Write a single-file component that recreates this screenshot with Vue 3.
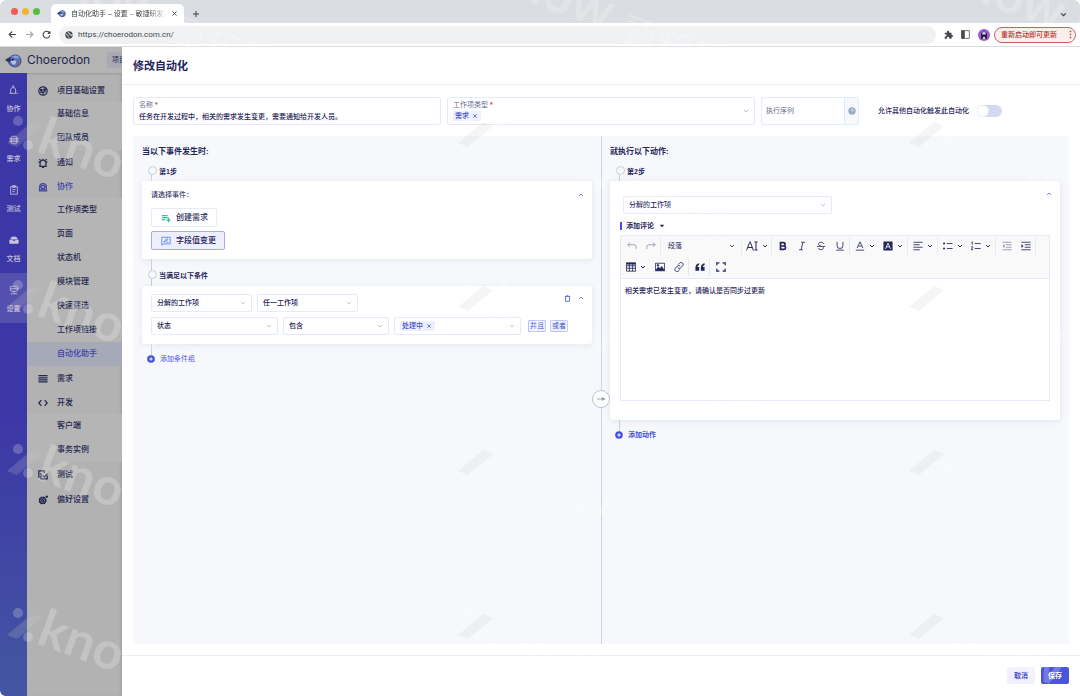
<script setup>
import { h, ref } from 'vue'

const glyphs = {
  back: '<path d="M21 12H4M11 4l-8 8 8 8"/>',
  forward: '<path d="M3 12h17M13 4l8 8-8 8"/>',
  reload: '<path d="M20 8a9 9 0 1 0 1 6M21 3v6h-6"/>',
  plus: '<path d="M12 3v18M3 12h18"/>',
  close: '<path d="M5 5l14 14M19 5L5 19"/>',
  down: '<path d="M4 8l8 8 8-8"/>',
  up: '<path d="M4 16l8-8 8 8"/>',
  globe: '<circle cx="12" cy="12" r="11" fill="currentColor" stroke="none"/><path d="M3 9l6 4v3l3 3v3M9 2l2 5 4 1v4l5 2 1-5" stroke="#eff1f3" stroke-width="2.5"/>',
  puzzle: '<path fill="currentColor" stroke="none" d="M2 7h6V5a3 3 0 0 1 6 0v2h6v6h1a3 3 0 0 1 0 6h-1v4h-6v-2a3 3 0 0 0-6 0v2H2v-6h2a3 3 0 0 0 0-6H2z"/>',
  panel: '<rect x="2" y="2" width="20" height="20"/><path fill="currentColor" d="M2 2h7v20H2z"/>',
  bell: '<path d="M1 20h18M4 20v-8a6 6 0 0 1 12 0v8"/><circle cx="10" cy="3" r="1.5"/><path d="M21 20h2"/>',
  stack: '<rect x="5" y="3" width="14" height="18" rx="4"/><path d="M1 8h22M1 12h22M1 16h22"/>',
  clip: '<path d="M4 4h16v18H4zM9 1h6v5H9zM8 11h8M8 16h6"/>',
  box: '<path fill="currentColor" d="M2 12h20v8H2zM4 10l3-5h10l3 5"/><path stroke="#3c37a6" d="M9 13h6"/>',
  server: '<rect x="3" y="3" width="18" height="12" rx="4"/><path d="M3 9h18M12 15v5M4 21h16"/>',
  group: '<circle cx="12" cy="12" r="10"/><circle cx="8" cy="10" r="2" fill="currentColor"/><circle cx="16" cy="9" r="2" fill="currentColor"/><path d="M6 17c2-5 8-2 6 3M12 14h6"/>',
  alarm: '<path d="M3 20h18M5 20v-8a7 7 0 0 1 14 0v8M12 2v3M3 3l3 2M21 3l-3 2M1 9h3M20 9h3M11 20v3h2v-3"/>',
  team: '<path d="M2 21h20M4 21v-9a8 8 0 0 1 16 0v9"/><circle cx="12" cy="12" r="4"/><path d="M8 21v-4h8v4M3 11h4M17 11h4"/>',
  rows: '<path d="M1 4h22M1 9h22M1 14h22M1 19h22"/>',
  code: '<path d="M8 5l-6 7 6 7M16 5l6 7-6 7"/>',
  check: '<path d="M7 17H2V2h13v5M7 7v14h15v-8M11 13l4 4 7-8"/>',
  gear: '<circle cx="11" cy="13" r="7.5" stroke-dasharray="4 2" stroke-width="4"/><circle cx="11" cy="13" r="7"/><circle cx="11" cy="13" r="2.5"/><path d="M21 1v6M18 4h6"/>',
  addlist: '<path d="M2 6h14M2 11h14M2 16h8M18 11v11M13 17h10"/>',
  edit: '<path d="M2 3h20v16H6l-4 3zM7 15l2-4 6-5 2 2-6 5zM13 15h5"/>',
  trash: '<path d="M3 5h18M9 2h6M5 5v17h14V5"/>',
  help: '<circle cx="12" cy="12" r="11" fill="currentColor" stroke="none"/><path stroke="#fff" d="M8 10c0-5 8-5 8-1 0 3-4 2-4 6M12 17v2"/>',
  addcircle: '<circle cx="12" cy="12" r="11.5" fill="currentColor" stroke="none"/><path stroke="#fff" stroke-width="3" d="M12 7v10M7 12h10"/>',
  arrow: '<path d="M2 12h15"/><path fill="currentColor" stroke="none" d="M14 7l9 5-9 5z"/>',
  caret: '<path fill="currentColor" stroke="none" d="M3 7h18l-9 10z"/>',
  undo: '<path d="M7 4L2 9l5 5M2 9h15a5 5 0 0 1 5 5v5"/>',
  redo: '<path d="M17 4l5 5-5 5M22 9H7a5 5 0 0 0-5 5v5"/>',
  size: '<path d="M1 21L8 3l7 18M4 15h8M20 4v16M17 4h6M17 20h6"/>',
  bold: '<path stroke-width="4" d="M6 4h7a4 4 0 0 1 0 8H6zM6 12h8a4 4 0 0 1 0 8H6z"/>',
  italic: '<path d="M10 3h9M5 21h9M14 3l-4 18"/>',
  strike: '<path d="M18 7c0-6-12-5-12 0 0 3 3 4 6 5M2 13h20M6 17c0 6 13 5 12-2"/>',
  under: '<path d="M5 2v9a7 7 0 0 0 14 0V2M3 22h18"/>',
  color: '<path d="M5 17l7-15 7 15M8 12h8M2 22h20"/>',
  bg: '<rect x="1" y="1" width="22" height="22" rx="1" fill="currentColor" stroke="none"/><path stroke="#fff" d="M6 19l6-14 6 14M8 14h8"/>',
  align: '<path d="M1 3h22M1 9h15M1 15h22M1 21h15"/>',
  ul: '<path d="M9 6h14M9 18h14"/><circle cx="2.5" cy="6" r="2.5" fill="currentColor" stroke="none"/><circle cx="2.5" cy="18" r="2.5" fill="currentColor" stroke="none"/>',
  ol: '<path d="M9 6h14M9 18h14M1 3l2-1v7M0 14h4v2l-4 5h5" />',
  outdent: '<path d="M1 3h22M9 9h14M9 15h14M1 21h22"/><path fill="currentColor" stroke="none" d="M6 7v10l-5-5z"/>',
  indent: '<path d="M1 3h22M9 9h14M9 15h14M1 21h22"/><path fill="currentColor" stroke="none" d="M1 7v10l5-5z"/>',
  table: '<path d="M1 2h22v20H1zM1 9h22M1 15h22M8 4v18M16 4v18"/><path stroke-width="4" d="M1 4h22"/>',
  image: '<path d="M1 3h22v18H1z"/><path fill="currentColor" d="M2 20l6-8 4 4 4-5 6 9z"/><circle cx="7" cy="8" r="2" fill="currentColor"/>',
  link: '<path d="M10 6l4-4a5 5 0 0 1 7 7l-5 5a5 5 0 0 1-7 0M14 18l-4 4a5 5 0 0 1-7-7l5-5a5 5 0 0 1 7 0"/>',
  quote: '<path fill="currentColor" stroke="none" d="M10 3c-6 1-9 5-9 11v7h9v-9H6c0-3 2-4 4-5zM23 3c-6 1-9 5-9 11v7h9v-9h-4c0-3 2-4 4-5z"/>',
  full: '<path stroke-width="3" d="M2 8V2h6M16 2h6v6M22 16v6h-6M8 22H2v-6"/>',
  fish: '<path fill="#5674bd" stroke="#2b3766" stroke-width="1" d="M6 9c3-6 13-7 16 0 2 6-1 12-8 12-5 0-8-3-9-7z"/><path fill="#2b3766" stroke="none" d="M0 11l7-4 2 5-4 3z"/><path fill="#b9c3e6" stroke="none" d="M8 13c2-2 6-2 8 0l-2 5c-3 0-5-2-6-5z"/><path fill="#8ba3e0" stroke="none" d="M10 6c4-2 8-1 10 2l-5 1z"/><circle cx="11" cy="11" r="1.5" fill="#1c244a" stroke="none"/><path stroke="#b3524f" stroke-width="2" d="M18 14l3 1M16 18l3-1"/>',
  face: '<circle cx="12" cy="12" r="12" fill="#9a5bd6" stroke="none"/><path fill="#2d2340" stroke="none" d="M6 20V10c0-7 12-7 12 0v10z"/><path fill="#cfc3dc" stroke="none" d="M8 9c0-4 8-4 8 0l-1 2H9z"/><path stroke="#fff" d="M10 20l2-4 2 4"/>'
}
const Icon = ({ name, s = 9, w = 2 }) =>
  h('svg', { viewBox: '0 0 24 24', width: s, height: s, fill: 'none', stroke: 'currentColor', 'stroke-width': w, 'aria-hidden': 'true', innerHTML: glyphs[name] })
Icon.props = ['name', 's', 'w']

const rail = [
  ['bell', '协作'], ['stack', '需求'], ['clip', '测试'], ['box', '文档'], ['server', '设置']
]
const menu = [
  { icon: 'group', text: '项目基础设置', subs: ['基础信息', '团队成员'] },
  { icon: 'alarm', text: '通知' },
  { icon: 'team', text: '协作', active: true, subs: ['工作项类型', '页面', '状态机', '模块管理', '快速筛选', '工作项链接', '自动化助手'] },
  { icon: 'rows', text: '需求' },
  { icon: 'code', text: '开发', subs: ['客户端', '事务实例'] },
  { icon: 'check', text: '测试' },
  { icon: 'gear', text: '偏好设置' }
]
const toolsTop = [
  [['size', '字号', true]],
  [['bold', '加粗'], ['italic', '斜体'], ['strike', '删除线'], ['under', '下划线']],
  [['color', '文字颜色', true], ['bg', '背景颜色', true]],
  [['align', '对齐', true]],
  [['ul', '无序列表', true], ['ol', '有序列表', true]],
  [['outdent', '减少缩进', false, true], ['indent', '增加缩进']]
]
const toolsBottom = [
  [['table', '表格', true], ['image', '图片'], ['link', '链接']],
  [['quote', '引用']],
  [['full', '全屏']]
]
const name = ref('任务在开发过程中，相关的需求发生变更，需要通知给开发人员。')
const comment = ref('相关需求已发生变更，请确认是否同步过更新')
const allow = ref(false)
const marks = []
for (let r = 0; r < 5; r++) for (let c = 0; c < 3; c++) marks.push([7 + c * 451, 635 - r * 164])
</script>

<template>
  <div class="window">
    <header class="tabs">
      <div class="lights"><i class="red"></i><i class="amber"></i><i class="green"></i></div>
      <div class="tab">
        <Icon name="fish" :s="9" />
        <span class="tab-title">自动化助手 – 设置 – 敏捷研发项</span>
        <button aria-label="关闭标签页"><Icon name="close" :s="7" :w="3" /></button>
      </div>
      <button class="new-tab" aria-label="新建标签页"><Icon name="plus" :s="8" :w="3" /></button>
      <button class="tab-list" aria-label="搜索标签页"><Icon name="down" :s="7" :w="4" /></button>
    </header>
    <div class="bar">
      <button aria-label="后退"><Icon name="back" :s="9" :w="3" /></button>
      <button class="dim" aria-label="前进"><Icon name="forward" :s="9" :w="3" /></button>
      <button aria-label="刷新"><Icon name="reload" :s="9" :w="3" /></button>
      <label class="address">
        <Icon name="globe" :s="8" />
        <input aria-label="网址" value="https://choerodon.com.cn/" />
      </label>
      <button aria-label="扩展程序"><Icon name="puzzle" :s="9" /></button>
      <button aria-label="侧边栏"><Icon name="panel" :s="9" /></button>
      <button aria-label="用户"><Icon name="face" :s="12" /></button>
      <button class="update">重新启动即可更新<b>⋮</b></button>
    </div>

    <div class="page">
      <div class="app">
        <div class="brand">
          <Icon name="fish" :s="17" :w="1" />
          <span class="brand-name">Choerodon</span>
          <span class="chip">项目</span>
        </div>
        <div class="navs">
          <nav class="rail">
            <a v-for="(r, i) in rail" :key="r[1]" href="#" :class="{ on: i === 4 }">
              <Icon :name="r[0]" :s="10" />{{ r[1] }}
            </a>
          </nav>
          <nav class="menu">
            <template v-for="m in menu" :key="m.text">
              <a href="#" class="head" :class="{ on: m.active, parent: m.subs }"><Icon :name="m.icon" :s="10" :w="3" />{{ m.text }}</a>
              <div v-if="m.subs" class="subs">
                <a v-for="s in m.subs" :key="s" href="#" :class="{ current: s === '自动化助手' }">{{ s }}</a>
              </div>
            </template>
          </nav>
        </div>
      </div>

      <main class="drawer">
        <h1>修改自动化</h1>
        <div class="content">
          <div class="form">
            <label class="field">
              <span>名称<em>*</em></span>
              <input v-model="name" />
            </label>
            <div class="field" role="combobox" aria-label="工作项类型" aria-expanded="false">
              <span>工作项类型<em>*</em></span>
              <div class="tag-line"><span class="tag">需求<button aria-label="移除需求"><Icon name="close" :s="6" :w="3" /></button></span></div>
              <Icon class="field-arrow" name="down" :s="6" :w="3" />
            </div>
            <label class="sequence">
              <input placeholder="执行序列" aria-label="执行序列" />
              <span><Icon name="help" :s="8" /></span>
            </label>
            <label class="allow">允许其他自动化触发此自动化<input v-model="allow" type="checkbox" role="switch" /></label>
          </div>

          <div class="flow">
            <section>
              <h2>当以下事件发生时:</h2>
              <h3 class="step">第1步</h3>
              <div class="card events">
                <div class="card-head"><span>请选择事件：</span><button aria-label="收起"><Icon name="up" :s="6" :w="3" /></button></div>
                <button class="event"><Icon class="teal" name="addlist" :s="10" :w="3" />创建需求</button>
                <button class="event picked"><Icon class="blue" name="edit" :s="10" />字段值变更</button>
              </div>
              <h3 class="step linked">当满足以下条件</h3>
              <div class="card conditions">
                <div class="line">
                  <span class="select w-m"><select aria-label="对象"><option>分解的工作项</option></select><Icon name="down" :s="6" :w="3" /></span>
                  <span class="select w-m"><select aria-label="范围"><option>任一工作项</option></select><Icon name="down" :s="6" :w="3" /></span>
                  <div class="actions">
                    <button aria-label="删除"><Icon name="trash" :s="7" :w="3" /></button>
                    <button aria-label="收起"><Icon name="up" :s="6" :w="3" /></button>
                  </div>
                </div>
                <div class="line">
                  <span class="select w-l"><select aria-label="字段"><option>状态</option></select><Icon name="down" :s="6" :w="3" /></span>
                  <span class="select w-m"><select aria-label="运算"><option>包含</option></select><Icon name="down" :s="6" :w="3" /></span>
                  <div class="select w-l multi" role="combobox" aria-label="值" aria-expanded="false">
                    <span class="tag">处理中<button aria-label="移除处理中"><Icon name="close" :s="6" :w="3" /></button></span>
                    <Icon name="down" :s="6" :w="3" />
                  </div>
                  <div class="joins"><button>并且</button><button>或者</button></div>
                </div>
              </div>
              <button class="add"><Icon name="addcircle" :s="8" />添加条件组</button>
            </section>

            <section class="right">
              <h2>就执行以下动作:</h2>
              <h3 class="step">第2步</h3>
              <div class="card action">
                <button class="fold" aria-label="收起"><Icon name="up" :s="6" :w="3" /></button>
                <span class="select target"><select aria-label="目标"><option>分解的工作项</option></select><Icon name="down" :s="6" :w="3" /></span>
                <button class="comment">添加评论<Icon name="caret" :s="6" /></button>
                <div class="editor">
                  <div class="tools">
                    <div class="tool-row">
                      <div class="group">
                        <button class="faded" aria-label="撤销"><Icon name="undo" :s="10" /></button>
                        <button class="faded" aria-label="重做"><Icon name="redo" :s="10" /></button>
                      </div>
                      <div class="group">
                        <span class="para"><select aria-label="段落格式"><option>段落</option></select><Icon name="down" :s="6" :w="4" /></span>
                      </div>
                      <div v-for="(g, i) in toolsTop" :key="i" class="group">
                        <button v-for="t in g" :key="t[0]" :aria-label="t[1]" :class="{ drop: t[2], faded: t[3] }">
                          <Icon :name="t[0]" :s="t[0] === 'size' ? 12 : 10" /><Icon v-if="t[2]" name="down" :s="6" :w="4" />
                        </button>
                      </div>
                    </div>
                    <div class="tool-row">
                      <div v-for="(g, i) in toolsBottom" :key="i" class="group">
                        <button v-for="t in g" :key="t[0]" :aria-label="t[1]" :class="{ drop: t[2] }">
                          <Icon :name="t[0]" :s="10" /><Icon v-if="t[2]" name="down" :s="6" :w="4" />
                        </button>
                      </div>
                    </div>
                  </div>
                  <textarea v-model="comment" aria-label="评论内容"></textarea>
                </div>
              </div>
              <button class="add bold"><Icon name="addcircle" :s="8" />添加动作</button>
            </section>
            <span class="next"><Icon name="arrow" :s="10" /></span>
          </div>
        </div>
        <footer>
          <button class="cancel">取消</button>
          <button class="save">保存</button>
        </footer>
      </main>
    </div>

    <svg class="watermark" aria-hidden="true">
      <g v-for="(m, i) in marks" :key="i" :transform="`translate(${m[0]} ${m[1]})`">
        <path class="slash" d="M0 0L25 -21L35 -17L10 4Z" />
        <circle class="dot" cx="11" cy="-22" r="5" />
        <circle class="dot" cx="21" cy="2" r="5" />
        <text class="latin" x="28" y="8" transform="rotate(20 28 8)">know</text>
        <text class="han" x="160" y="61" transform="rotate(20 160 61)">甄知科技</text>
      </g>
    </svg>
  </div>
</template>

<style>
body { margin: 0; background: #fff; }
</style>

<style scoped>
* { box-sizing: border-box; }
.window {
  position: relative;
  display: flex;
  flex-direction: column;
  min-height: 100vh;
  overflow: hidden;
  border-radius: 6px;
  background: #fff;
  color: #1f2459;
  font: 7px/10px "Liberation Sans", "Noto Sans CJK SC", sans-serif;
}
button, input, select, textarea {
  margin: 0;
  padding: 0;
  border: 0;
  outline: 0;
  background: none;
  color: inherit;
  font: inherit;
}
button { display: inline-flex; align-items: center; justify-content: center; }
svg { flex: none; display: block; }
a { color: inherit; text-decoration: none; }
h1, h2, h3 { margin: 0; }

.tabs { display: flex; align-items: center; height: 23px; padding: 0 13px 0 11px; background: #dadde2; color: #3c4043; }
.lights { display: flex; gap: 4px; width: 40px; }
.lights i { width: 7px; height: 7px; border-radius: 50%; }
.red { background: #ee5c54; }
.amber { background: #f3b42f; }
.green { background: #55c03f; }
.tab { display: flex; align-items: center; align-self: flex-end; gap: 5px; width: 133px; height: 19px; padding: 0 6px; border-radius: 5px 5px 0 0; background: #fff; }
.tab-title { flex: 1; overflow: hidden; white-space: nowrap; -webkit-mask-image: linear-gradient(90deg, #000 85%, transparent); mask-image: linear-gradient(90deg, #000 85%, transparent); }
.new-tab { margin: 5px 0 0 8px; }
.tab-list { margin: 5px 0 0 auto; }
.bar { display: flex; align-items: center; gap: 8px; height: 24px; padding: 0 4px 0 8px; border-bottom: 1px solid #d9dbde; color: #45494d; }
.dim { color: #a2a5a8; }
.address { display: flex; flex: 1; align-items: center; gap: 5px; height: 18px; padding: 0 6px; border-radius: 9px; background: #eff1f3; }
.address input { flex: 1; font: 8px/12px Roboto, sans-serif; }
.update { justify-content: space-between; width: 82px; height: 16px; margin-left: -4px; padding: 0 5px 0 6px; border: 1px solid #c9605c; border-radius: 8px; background: #fbeeed; color: #b8322c; font-weight: 500; white-space: nowrap; }
.update b { width: 4px; font-size: 9px; }

.page { display: flex; flex: 1; }
.app { display: flex; flex: none; flex-direction: column; width: 122px; overflow: hidden; background: #b2b2b2; box-shadow: inset -2px 0 2px #a6a6a6; }
.brand { display: flex; align-items: center; height: 26px; padding-left: 5px; overflow: hidden; background: #b4b4b4; box-shadow: 0 1px 2px #999; white-space: nowrap; }
.brand-name { flex: none; width: 79px; margin-left: 5px; color: #232750; font: 12px/16px Inter, sans-serif; }
.chip { flex: none; width: 40px; height: 16px; margin-left: 1px; padding: 3px 5px; border-radius: 2px; background: #a8aab3; }
.navs { display: flex; flex: 1; }
.rail { width: 27px; background: linear-gradient(#3c37a6 55%, #4456a2); color: #c6c5dc; font-weight: 500; }
.rail a { display: flex; flex-direction: column; align-items: center; gap: 9px; height: 50px; padding-top: 12px; }
.rail .on { background: #5350ae; }
.menu { flex: 1; padding-top: 6px; color: #23264f; font-size: 8px; font-weight: 500; }
.menu a { display: flex; align-items: center; height: 24px; padding-left: 30px; }
.menu .head { gap: 9px; height: 25px; padding-left: 11px; }
.menu .parent { height: 23px; }
.menu .on { color: #4044a8; }
.subs { background: #b5b5b5; }
.menu .current { background: #a5a9b8; color: #4044a8; }

.drawer { display: flex; flex: 1; flex-direction: column; min-width: 0; }
h1 { height: 38px; padding: 11px; border-bottom: 1px solid #eaf0f9; font-size: 11px; line-height: 16px; }
.content { display: flex; flex: 1; flex-direction: column; gap: 11px; padding: 12px 11px 11px; }
.form { display: grid; grid-template-columns: 308fr 308fr 98fr 204fr; gap: 6px; }
.field { position: relative; display: flex; flex-direction: column; height: 28px; padding: 2px 5px; border: 1px solid #e3ebf6; border-radius: 2px; }
.field > span { color: #6b6e91; }
em { margin-left: 2px; color: #e0403a; font-style: normal; font-weight: bold; }
.field input { height: 12px; font-weight: 500; }
.field-arrow { position: absolute; right: 5px; top: 10px; color: #9aa9c4; }
.tag-line { display: flex; padding-top: 1px; }
.tag { display: flex; align-items: center; gap: 3px; height: 10px; padding: 0 3px 0 2px; border-radius: 2px; background: #eeeffd; color: #4650cf; font-weight: 500; }
.sequence { display: flex; height: 28px; overflow: hidden; border: 1px solid #e3ebf6; border-radius: 2px; }
.sequence input { flex: 1; min-width: 0; padding: 0 4px; }
.sequence input::placeholder { color: #686b8d; opacity: 1; }
.sequence span { display: grid; place-items: center; width: 14px; border-left: 1px solid #e3ebf6; background: #f5f8fd; color: #99aabf; }
.allow { display: flex; align-items: center; gap: 8px; padding-left: 13px; font-weight: 500; }
.allow input { appearance: none; width: 25px; height: 12px; border-radius: 6px; background: radial-gradient(circle at 6px 6px, #fff 5px, transparent 6px) #d5daf1; }

.flow { position: relative; display: grid; flex: 1; grid-template-columns: 1fr 1fr; background: #f6f8fc; }
section { min-width: 0; padding: 9px; }
.right { border-left: 1px solid #cbd5e5; padding-left: 8px; }
h2 { height: 20px; padding-top: 1px; font-size: 8px; line-height: 12px; }
.step { position: relative; height: 16px; padding: 2px 0 0 17px; font-size: 7px; line-height: 10px; }
.step::before { content: ""; position: absolute; left: 6px; top: 1px; width: 7px; height: 7px; border: 1px solid #c8d0dd; border-radius: 50%; background: #f6f8fc; z-index: 1; }
.step::after { content: ""; position: absolute; left: 9px; top: 8px; bottom: 0; width: 1px; background: #c8d0dd; }
.linked { height: 27px; padding-top: 12px; }
.linked::before { top: 11px; }
.linked::after { top: 0; }
.card { position: relative; border-radius: 3px; background: #fff; box-shadow: 0 1px 6px rgba(40, 50, 90, .1); }
.events { display: flex; flex-direction: column; align-items: flex-start; gap: 4px; height: 78px; padding: 9px 8px 0 9px; }
.card-head { display: flex; justify-content: space-between; width: 100%; height: 14px; color: #303463; font-weight: 500; }
.card-head button, .fold, .actions { color: #5a62d8; }
.card-head button { height: 10px; }
.event { gap: 5px; height: 19px; padding: 0 8px 0 9px; border: 1px solid #e3ebf6; border-radius: 2px; font-size: 8px; font-weight: 500; }
.picked { border-color: #a9a9ee; background: #eeeffd; }
.teal { color: #3fb89b; }
.blue { color: #5580f0; }
.conditions { display: flex; flex-direction: column; gap: 5px; height: 58px; padding: 8px 8px 0 9px; }
.line { display: flex; gap: 5px; }
.select { position: relative; display: flex; align-items: center; height: 18px; padding: 0 5px; border: 1px solid #e3ebf6; border-radius: 2px; background: #fff; font-weight: 500; }
.select > svg, .para > svg { position: absolute; right: 5px; color: #a5b1c8; pointer-events: none; }
.select select, .para select { appearance: none; width: 100%; height: 100%; }
.w-m { flex: 0 1 101px; }
.w-l { flex: 0 1 127px; }
.line .w-l + .w-m { flex-basis: 106px; }
.actions { display: flex; gap: 7px; height: 8px; margin-left: auto; }
.joins { display: flex; align-items: center; gap: 4px; margin-left: 2px; }
.joins button { width: 18px; height: 12px; border: 1px solid #b6c4f5; border-radius: 1px; background: #edf1fe; color: #4650cf; }
.add { position: relative; gap: 5px; height: 20px; margin: 5px 0 0 5px; color: #4650d8; }
.add::before { content: ""; position: absolute; left: 4px; top: -5px; width: 1px; height: 11px; background: #c8d0dd; }
.bold { font-weight: 600; }
.action { display: flex; flex-direction: column; align-items: flex-start; height: 239px; padding: 15px 10px 0; }
.fold { position: absolute; right: 8px; top: 10px; }
.target { width: 209px; margin-left: 3px; }
.comment { gap: 5px; height: 8px; margin: 8px 0 5px; padding-left: 4px; border-left: 2px solid #4650e0; font-weight: 600; }
.editor { display: flex; flex-direction: column; align-self: stretch; height: 166px; border: 1px solid #e3ebf6; }
.tools { padding-bottom: 1px; border-bottom: 1px solid #e3ebf6; background: #f9f9fa; color: #22265a; }
.tool-row { display: flex; height: 20px; align-items: center; }
.tool-row + .tool-row { margin-top: 1px; }
.group { display: flex; align-items: center; height: 18px; padding-left: 1px; border-right: 1px solid #e3ebf6; }
.tool-row + .tool-row .group:last-child { border-right: 0; }
.group button { width: 19px; height: 18px; }
.group button.drop { gap: 4px; width: 28px; }
.faded { opacity: .5; }
.para { position: relative; display: flex; align-items: center; width: 79px; height: 18px; padding-left: 6px; }
.para > svg { color: inherit; right: 6px; }
textarea { flex: 1; padding: 7px 4px; resize: none; font-weight: 500; }
.next { position: absolute; left: 50%; top: 254px; display: grid; place-items: center; width: 18px; height: 18px; margin-left: -9px; border: 1px solid #bcc3d1; border-radius: 50%; background: #fff; color: #8f95ab; }
footer { display: flex; justify-content: flex-end; gap: 6px; height: 41px; padding: 11px 11px 12px; border-top: 1px solid #ebedf1; }
footer button { width: 28px; border-radius: 2px; font-weight: 600; }
.cancel { background: #f0f1fd; color: #4650cf; }
.save { background: #4b55dc; color: #fff; }

.watermark { position: absolute; inset: 0; width: 100%; height: 100%; pointer-events: none; }
.slash { fill: rgba(205, 205, 205, .2); }
.dot, .latin, .han { fill: rgba(255, 255, 255, .22); }
.latin { font: bold 52px Lato, sans-serif; }
.han { font: 36px "Noto Sans CJK SC", sans-serif; }
</style>
